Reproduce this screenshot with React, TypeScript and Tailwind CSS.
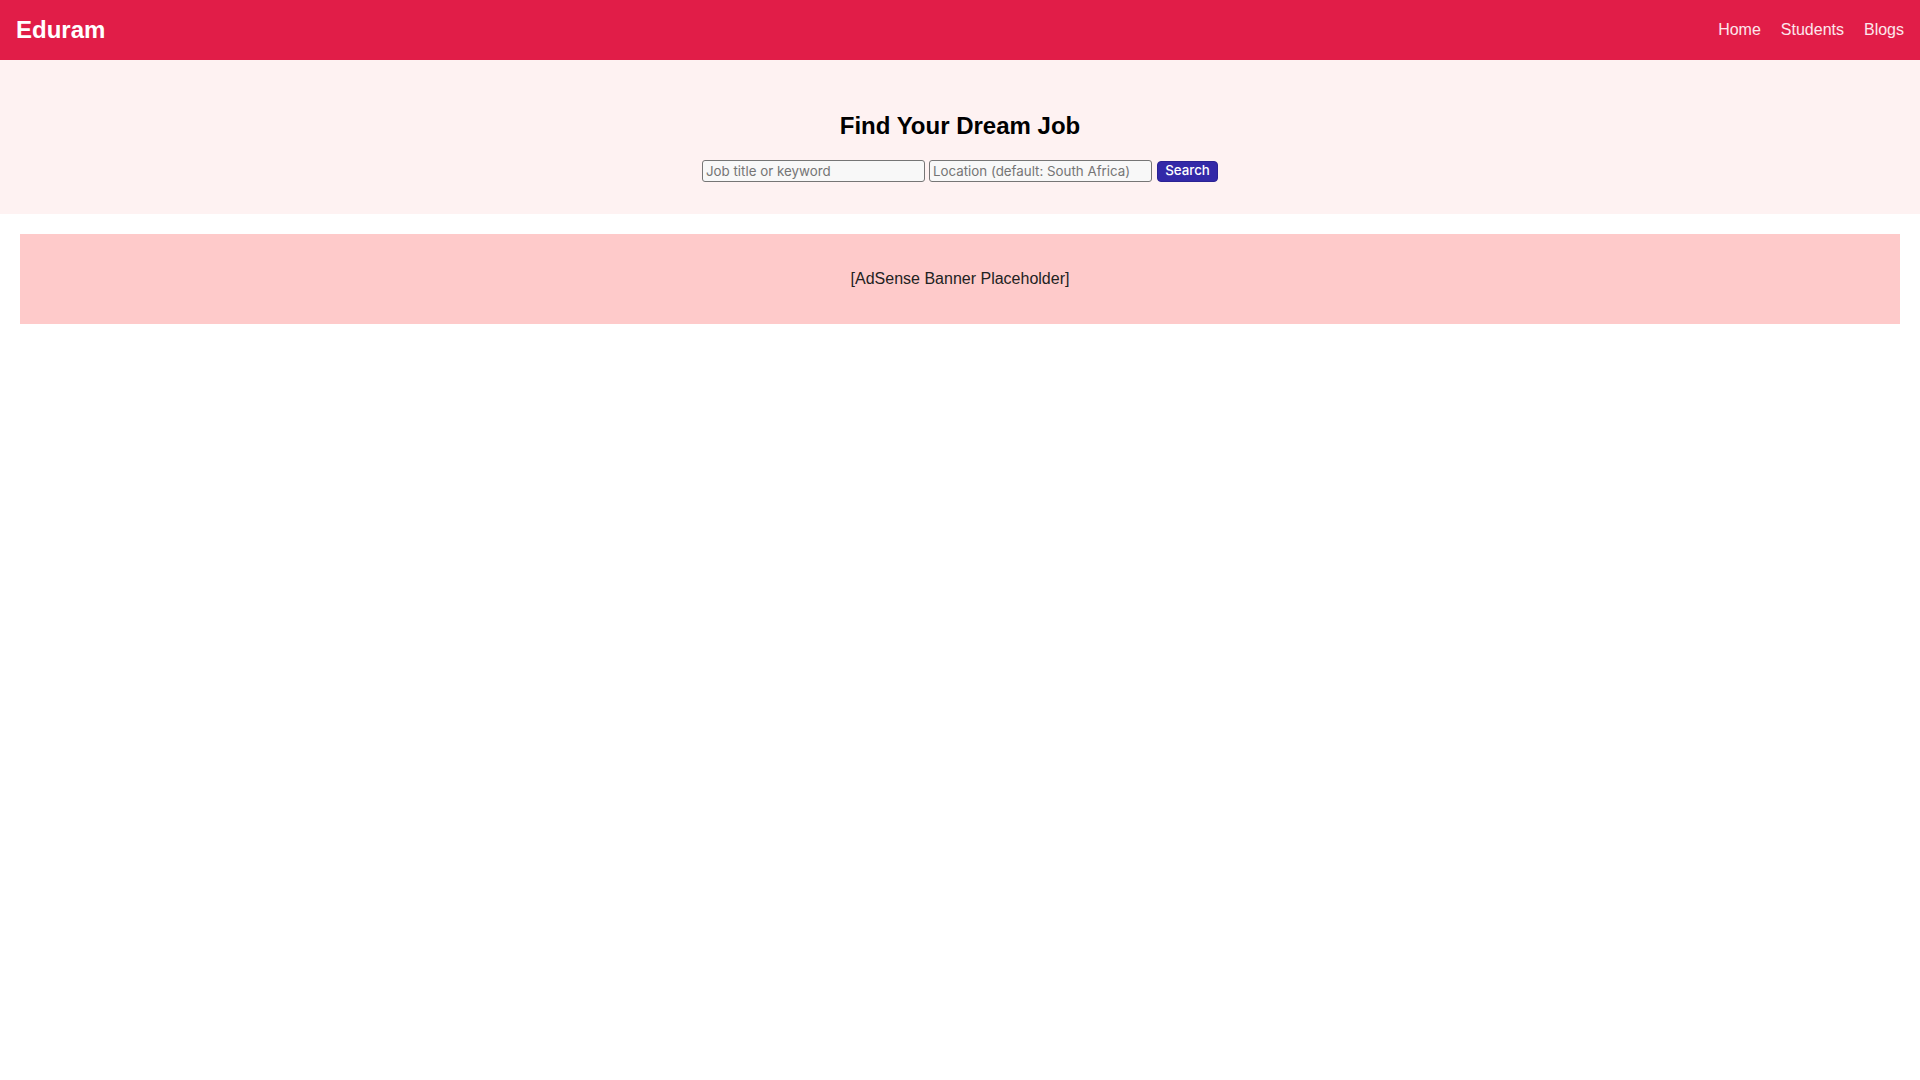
import React from 'react'

const navLinks = ['Home', 'Students', 'Blogs']

const inputCls =
  "w-[223px] h-[22px] px-[3px] border border-[#767676] rounded-[3px] bg-[#f8f8f8] font-['Inter','Noto_Sans',sans-serif] text-[13.33px] placeholder:text-[#757575] outline-none"

export default function App() {
  return (
    <div className="min-h-screen bg-white font-['Liberation_Sans',Arial,sans-serif] text-black">
      {/* Top bar */}
      <header className="h-[60px] bg-[#e11d48] px-4 flex items-center justify-between">
        <div className="text-2xl leading-8 font-bold text-white">Eduram</div>
        <nav className="flex items-center gap-5 text-base text-white/90">
          {navLinks.map((link) => (
            <a key={link} href="#" className="leading-6">
              {link}
            </a>
          ))}
        </nav>
      </header>

      {/* Hero search */}
      <section className="bg-[#fef2f2] pt-[52px] pb-[32px] flex flex-col items-center">
        <h2 className="text-2xl leading-7 font-bold mb-5">Find Your Dream Job</h2>
        <form className="flex items-center gap-1">
          <input type="text" placeholder="Job title or keyword" className={inputCls} />
          <input type="text" placeholder="Location (default: South Africa)" className={inputCls} />
          <button
            type="submit"
            className="ml-[1px] w-[61px] h-[21px] rounded-[4px] bg-[#3329a8] border border-[#2b2294] text-white font-['Inter','Noto_Sans',sans-serif] font-medium text-[13.33px] leading-none"
          >
            Search
          </button>
        </form>
      </section>

      {/* Ad slot */}
      <div className="mx-5 mt-5 h-[90px] bg-[#fecaca] flex items-center justify-center text-base text-[#222]">
        [AdSense Banner Placeholder]
      </div>
    </div>
  )
}
